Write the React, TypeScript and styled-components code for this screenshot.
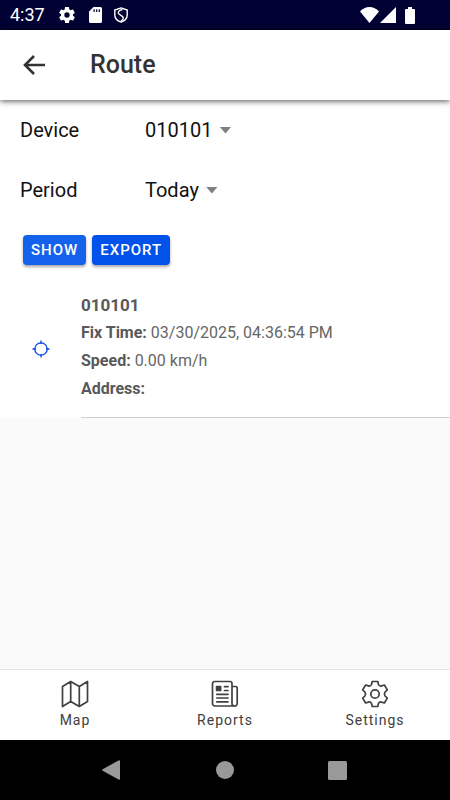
import React from "react";
import styled, { createGlobalStyle } from "styled-components";

const GlobalStyle = createGlobalStyle`
  *, *::before, *::after { box-sizing: border-box; }
  body {
    margin: 0;
    background: #fafafa;
    color: #1a1a1a;
    font-family: Roboto, "Liberation Sans", sans-serif;
  }
`;

const Screen = styled.div`
  display: flex;
  flex-direction: column;
  min-height: 100vh;
`;

const StatusBar = styled.div`
  display: flex;
  align-items: center;
  justify-content: space-between;
  height: 30px;
  padding: 0 35px 0 10px;
  background: #000033;
  color: #fff;
`;

const StatusGroup = styled.div<{ $gap: number }>`
  display: flex;
  align-items: center;
  gap: ${(p) => p.$gap}px;

  svg { display: block; }
`;

const Clock = styled.time`
  font-size: 18px;
  line-height: 30px;
`;

const Header = styled.header`
  display: flex;
  align-items: center;
  gap: 36px;
  height: 70px;
  padding: 0 14px;
  background: #fff;
  box-shadow: 0 1px 6px rgba(0, 0, 0, 0.7);
  z-index: 1;
`;

const BackButton = styled.button`
  display: grid;
  place-items: center;
  width: 40px;
  height: 40px;
  padding: 0;
  border: 0;
  background: none;
  color: #333;
`;

const Title = styled.h1`
  margin: 0;
  color: #333;
  font-size: 25px;
  font-weight: 500;
  line-height: 32px;
`;

const Main = styled.main`
  flex: 1;
`;

const Panel = styled.div`
  background: #fff;
`;

const Field = styled.div`
  display: grid;
  grid-template-columns: 125px 1fr;
  align-items: center;
  height: 60px;
  padding: 0 20px;
  color: #111;
  font-size: 20px;
`;

const Picker = styled.div`
  display: flex;
  align-items: center;
  gap: 7px;
`;

const Select = styled.select`
  appearance: none;
  field-sizing: content;
  margin: 0;
  padding: 0;
  border: 0;
  background: none;
  color: inherit;
  font: inherit;
`;

const Caret = styled.span`
  width: 12px;
  height: 7px;
  background: #808080;
  clip-path: polygon(0 0, 100% 0, 50% 100%);
`;

const Actions = styled.div`
  display: flex;
  gap: 6px;
  padding: 15px 23px 24px;
`;

const ActionButton = styled.button<{ $tone: string }>`
  height: 30px;
  padding: 0 8px;
  border: 0;
  border-radius: 4px;
  background: ${(p) => p.$tone};
  box-shadow: 0 2px 3px rgba(0, 0, 0, 0.35);
  color: #fff;
  font: 500 15px/30px Roboto, "Liberation Sans", sans-serif;
  letter-spacing: 1px;
`;

const List = styled.ul`
  margin: 0;
  padding: 0;
  list-style: none;
`;

const Item = styled.li`
  display: grid;
  grid-template-columns: 81px 1fr;
`;

const LocateButton = styled.button`
  display: grid;
  place-items: center;
  justify-self: center;
  width: 30px;
  height: 30px;
  margin-top: 45px;
  padding: 0;
  border: 0;
  background: none;
  color: #0b46e8;
`;

const Details = styled.div`
  padding: 2px 0 14px;
  border-bottom: 1px solid #d0d0d0;
  color: #666;
  font-size: 16px;
  line-height: 28px;

  p { margin: 0; }
  b { font-weight: 700; color: #595959; }
`;

const ItemName = styled.h2`
  margin: 0;
  color: #595959;
  font-size: 17px;
  font-weight: 700;
  line-height: 28px;
`;

const Tabs = styled.nav`
  display: grid;
  grid-template-columns: repeat(3, 1fr);
  height: 71px;
  border-top: 1px solid #e6e6e6;
  background: #fff;
`;

const Tab = styled.a`
  display: flex;
  flex-direction: column;
  align-items: center;
  padding-top: 10px;
  color: #404040;
  font-size: 14px;
  line-height: 20px;
  letter-spacing: 1px;
  text-decoration: none;

  svg { display: block; margin-bottom: 2px; }
`;

const SystemBar = styled.div`
  display: grid;
  grid-template-columns: repeat(3, 1fr);
  justify-items: center;
  align-items: center;
  height: 60px;
  padding: 0 12.5%;
  background: #000;
`;

const SystemButton = styled.button`
  display: grid;
  place-items: center;
  width: 24px;
  height: 24px;
  padding: 0;
  border: 0;
  background: none;
  color: #999;
`;

const GearSolid = () => (
  <svg width="20" height="20" viewBox="0 0 24 24" fill="currentColor">
    <path d="M19.14 12.94c.04-.3.06-.61.06-.94s-.02-.64-.07-.94l2.03-1.58a.49.49 0 0 0 .12-.61l-1.92-3.32a.49.49 0 0 0-.59-.22l-2.39.96a7 7 0 0 0-1.62-.94l-.36-2.54a.48.48 0 0 0-.48-.41h-3.84a.48.48 0 0 0-.47.41l-.36 2.54c-.59.24-1.13.57-1.62.94l-2.39-.96a.48.48 0 0 0-.59.22L2.74 8.87a.48.48 0 0 0 .12.61l2.03 1.58a7 7 0 0 0 0 1.88l-2.03 1.58a.49.49 0 0 0-.12.61l1.92 3.32c.12.22.37.29.59.22l2.39-.96c.5.38 1.03.7 1.62.94l.36 2.54c.05.24.24.41.48.41h3.84c.24 0 .44-.17.47-.41l.36-2.54a7 7 0 0 0 1.62-.94l2.39.96c.22.08.47 0 .59-.22l1.92-3.32a.48.48 0 0 0-.12-.61zM12 15.2a3.2 3.2 0 1 1 0-6.4 3.2 3.2 0 0 1 0 6.4z" />
  </svg>
);

const SdCard = () => (
  <svg width="13" height="16" viewBox="0 0 13 16" fill="currentColor">
    <path fillRule="evenodd" d="M4.5 0H11.5A1.5 1.5 0 0 1 13 1.5V14.5A1.5 1.5 0 0 1 11.5 16H1.5A1.5 1.5 0 0 1 0 14.5V4.5ZM4.5 2.3V5H5.7V2.3ZM7.1 2.3V5H8.3V2.3ZM9.7 2.3V5H10.9V2.3Z" />
  </svg>
);

const Shield = () => (
  <svg width="14" height="16" viewBox="0 0 14 16" fill="none" stroke="currentColor" strokeWidth="1.4">
    <path d="M7 .9 13.2 3V8C13.2 11.2 10.3 14 7 15.2 3.7 14 .8 11.2 .8 8V3Z" />
    <path d="M8.5 2.5C5 3 3.2 5.4 5 7L8.6 9.6C10.2 11 8.8 13 6.8 14" />
  </svg>
);

const Wifi = () => (
  <svg width="19" height="16" viewBox="0 0 19 16" fill="currentColor">
    <path d="M9.5 16 0 4.5C2.5 1.5 6 0 9.5 0S16.5 1.5 19 4.5Z" />
  </svg>
);

const Signal = () => (
  <svg width="16" height="16" viewBox="0 0 16 16" fill="currentColor">
    <path d="M16 0V16H0Z" />
  </svg>
);

const Battery = () => (
  <svg width="10" height="17" viewBox="0 0 10 17" fill="currentColor">
    <path d="M3 0H7V2H9A1 1 0 0 1 10 3V16A1 1 0 0 1 9 17H1A1 1 0 0 1 0 16V3A1 1 0 0 1 1 2H3Z" />
  </svg>
);

const ArrowBack = () => (
  <svg width="22" height="20" viewBox="0 0 22 20" fill="none" stroke="currentColor" strokeWidth="2.6">
    <path d="M11 1 2 10 11 19M2 10H22" />
  </svg>
);

const Crosshair = () => (
  <svg width="18" height="18" viewBox="0 0 18 18" fill="none" stroke="currentColor" strokeWidth="1.3">
    <circle cx="9" cy="9" r="6.2" />
    <path d="M9 .5V4M9 14V17.5M.5 9H4M14 9H17.5" />
  </svg>
);

const MapIcon = () => (
  <svg width="28" height="28" viewBox="0 0 28 28" fill="none" stroke="currentColor" strokeWidth="1.7" strokeLinejoin="round">
    <path d="M1.5 6.5 9.7 1.5 18.3 6.5 26.5 1.5V21.5L18.3 26.5 9.7 21.5 1.5 26.5ZM9.7 1.5V21.5M18.3 6.5V26.5" />
  </svg>
);

const NewsIcon = () => (
  <svg width="28" height="28" viewBox="0 0 28 28" fill="none" stroke="currentColor" strokeWidth="1.7" strokeLinecap="round">
    <path d="M24 26H4A2.5 2.5 0 0 1 1.5 23.5V3.5A2 2 0 0 1 3.5 1.5H19A2 2 0 0 1 21 3.5V23.5A2.6 2.6 0 0 0 26.2 23.5V8A1.5 1.5 0 0 0 24.7 6.5H21" />
    <path d="M13.5 6.7H17M13.5 10.5H17M5.8 14.3H17M5.8 18H17M5.8 21.8H17" />
    <rect x="5.6" y="6.5" width="4" height="4" fill="currentColor" strokeLinejoin="round" />
  </svg>
);

const GearOutline = () => (
  <svg width="28" height="28" viewBox="0 0 28 28" fill="none" stroke="currentColor" strokeWidth="1.7" strokeLinejoin="round">
    <path d="M11.2 1.5H16.8L17.4 4.4Q18.6 6.6 20.6 5.9L23.4 5 26.3 9.9 24.1 12Q22.7 14 24.1 16L26.3 18.1 23.4 23 20.6 22.1Q18.6 21.4 17.4 23.6L16.8 26.5H11.2L10.6 23.6Q9.4 21.4 7.4 22.1L4.6 23 1.7 18.1 3.9 16Q5.3 14 3.9 12L1.7 9.9 4.6 5 7.4 5.9Q9.4 6.6 10.6 4.4Z" />
    <circle cx="14" cy="14" r="4.2" />
  </svg>
);

interface PickerFieldProps {
  id: string;
  label: string;
  options: string[];
}

const PickerField = ({ id, label, options }: PickerFieldProps) => (
  <Field>
    <label htmlFor={id}>{label}</label>
    <Picker>
      <Select id={id}>
        {options.map((option) => (
          <option key={option}>{option}</option>
        ))}
      </Select>
      <Caret />
    </Picker>
  </Field>
);

const tabs = [
  { label: "Map", href: "#map", Icon: MapIcon },
  { label: "Reports", href: "#reports", Icon: NewsIcon },
  { label: "Settings", href: "#settings", Icon: GearOutline },
];

export default function App() {
  return (
    <Screen>
      <GlobalStyle />
      <StatusBar>
        <StatusGroup $gap={12}>
          <Clock>4:37</Clock>
          <GearSolid />
          <SdCard />
          <Shield />
        </StatusGroup>
        <StatusGroup $gap={9}>
          <StatusGroup $gap={1}>
            <Wifi />
            <Signal />
          </StatusGroup>
          <Battery />
        </StatusGroup>
      </StatusBar>
      <Header>
        <BackButton aria-label="Back">
          <ArrowBack />
        </BackButton>
        <Title>Route</Title>
      </Header>
      <Main>
        <Panel>
          <PickerField id="device" label="Device" options={["010101"]} />
          <PickerField id="period" label="Period" options={["Today"]} />
          <Actions>
            <ActionButton $tone="#1462ec">SHOW</ActionButton>
            <ActionButton $tone="#0052ea">EXPORT</ActionButton>
          </Actions>
          <List>
            <Item>
              <LocateButton aria-label="Locate">
                <Crosshair />
              </LocateButton>
              <Details>
                <ItemName>010101</ItemName>
                <p><b>Fix Time:</b> 03/30/2025, 04:36:54 PM</p>
                <p><b>Speed:</b> 0.00 km/h</p>
                <p><b>Address:</b></p>
              </Details>
            </Item>
          </List>
        </Panel>
      </Main>
      <Tabs>
        {tabs.map(({ label, href, Icon }) => (
          <Tab key={label} href={href}>
            <Icon />
            {label}
          </Tab>
        ))}
      </Tabs>
      <SystemBar>
        <SystemButton aria-label="System back">
          <svg width="22" height="20" viewBox="0 0 22 20" fill="currentColor">
            <path d="M17 .2Q18 0 18 1V19Q18 20 17 19.8L.6 10.8Q-.4 10 .6 9.2Z" />
          </svg>
        </SystemButton>
        <SystemButton aria-label="Home">
          <svg width="18" height="18" viewBox="0 0 18 18" fill="currentColor">
            <circle cx="9" cy="9" r="9" />
          </svg>
        </SystemButton>
        <SystemButton aria-label="Recent apps">
          <svg width="19" height="19" viewBox="0 0 19 19" fill="currentColor">
            <rect width="19" height="19" rx="1.5" />
          </svg>
        </SystemButton>
      </SystemBar>
    </Screen>
  );
}
